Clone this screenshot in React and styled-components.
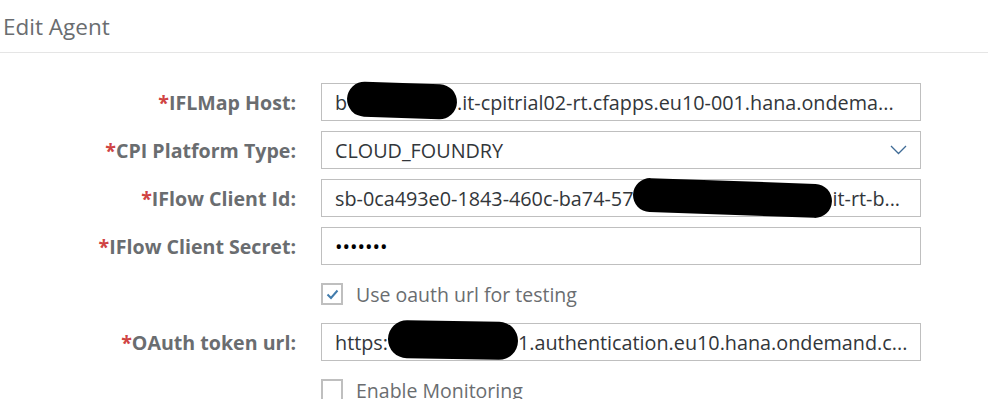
import React from 'react'
import styled, { createGlobalStyle } from 'styled-components'

const Global = createGlobalStyle`
  body {
    margin: 0;
    background: #fff;
    font-family: "Open Sans", "Noto Sans", sans-serif;
  }
`

const Page = styled.div`
  width: 988px;
  height: 399px;
  overflow: hidden;
  background: #fff;
`

const Header = styled.header`
  height: 52px;
  border-bottom: 1px solid #e5e5e5;
  display: flex;
  align-items: center;
  padding-left: 3px;
`

const Title = styled.h1`
  margin: 0;
  font-size: 22.5px;
  font-weight: 400;
  color: #6a6d70;
`

const Form = styled.div`
  display: grid;
  grid-template-columns: 296px 600px;
  column-gap: 25px;
  row-gap: 10px;
  padding-top: 30px;
`

const Label = styled.label`
  display: flex;
  align-items: center;
  justify-content: flex-end;
  font-size: 19.6px;
  font-weight: 700;
  color: #6a6d70;
  white-space: nowrap;
`

const Req = styled.span`
  color: #d04343;
`

const Field = styled.div`
  height: 38px;
  box-sizing: border-box;
  border: 1px solid #bfbfbf;
  display: flex;
  align-items: center;
  padding: 0 13px;
  font-size: 19.8px;
  color: #32363a;
  white-space: nowrap;
`

const Value = styled.span`
  flex: 1;
  display: flex;
  align-items: center;
`

const Dots = styled.span`
  font-size: 20px;
  color: #000;
`

const Redact = styled.span`
  display: inline-block;
  flex: none;
  width: ${p => p.$w}px;
  height: ${p => p.$h}px;
  background: #000;
  border-radius: ${p => p.$h / 2}px;
  transform: translateY(${p => p.$dy || 0}px) rotate(${p => p.$rot || 0}deg);
`

const CheckRow = styled.div`
  grid-column: 2;
  height: 22px;
  display: flex;
  align-items: center;
  gap: 13px;
  margin: 8px 0;
  font-size: 19.5px;
  color: #6a6d70;
  white-space: nowrap;
`

const Box = styled.span`
  width: 22px;
  height: 22px;
  box-sizing: border-box;
  border: 2px solid #bfbfbf;
  display: flex;
  align-items: center;
  justify-content: center;
`

const Chevron = () => (
  <svg width="17" height="10" viewBox="0 0 17 10">
    <polyline points="1,1 8.5,8.5 16,1" fill="none" stroke="#3f6b96" strokeWidth="1.3" />
  </svg>
)

const Check = () => (
  <svg width="13" height="11" viewBox="0 0 13 11">
    <polyline points="1.5,5.5 5,9 11.5,1.5" fill="none" stroke="#427cac" strokeWidth="2" />
  </svg>
)

const Checkbox = ({ checked, children }) => (
  <CheckRow>
    <Box>{checked && <Check />}</Box>
    {children}
  </CheckRow>
)

export default function App() {
  return (
    <Page>
      <Global />
      <Header>
        <Title>Edit Agent</Title>
      </Header>
      <Form>
        <Label><Req>*</Req>IFLMap Host:</Label>
        <Field>
          <Value>b<Redact $w={110} $h={35} $dy={-2} $rot={2} />.it-cpitrial02-rt.cfapps.eu10-001.hana.ondema...</Value>
        </Field>

        <Label><Req>*</Req>CPI Platform Type:</Label>
        <Field>
          <Value>CLOUD_FOUNDRY</Value>
          <Chevron />
        </Field>

        <Label><Req>*</Req>IFlow Client Id:</Label>
        <Field>
          <Value>sb-0ca493e0-1843-460c-ba74-57<Redact $w={199} $h={34} $dy={0} $rot={2} />it-rt-b...</Value>
        </Field>

        <Label><Req>*</Req>IFlow Client Secret:</Label>
        <Field>
          <Dots>•••••••</Dots>
        </Field>

        <Checkbox checked>Use oauth url for testing</Checkbox>

        <Label><Req>*</Req>OAuth token url:</Label>
        <Field>
          <Value>https:<Redact $w={130} $h={38} $dy={-2} $rot={1} />1.authentication.eu10.hana.ondemand.c...</Value>
        </Field>

        <Checkbox>Enable Monitoring</Checkbox>
      </Form>
    </Page>
  )
}
